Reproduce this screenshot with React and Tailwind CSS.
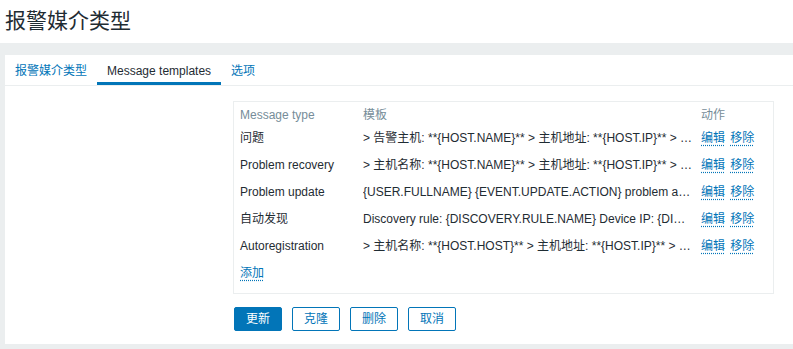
import React from "react";

const rows = [
  {
    type: "问题",
    template: "> 告警主机: **{HOST.NAME}** > 主机地址: **{HOST.IP}** > 告警时间: {EVENT.DATE} {EVENT.TIME}",
  },
  {
    type: "Problem recovery",
    template: "> 主机名称: **{HOST.NAME}** > 主机地址: **{HOST.IP}** > 恢复时间: {EVENT.RECOVERY.DATE}",
  },
  {
    type: "Problem update",
    template: "{USER.FULLNAME} {EVENT.UPDATE.ACTION} problem at {EVENT.UPDATE.DATE} {EVENT.UPDATE.TIME}",
  },
  {
    type: "自动发现",
    template: "Discovery rule: {DISCOVERY.RULE.NAME} Device IP: {DISCOVERY.DEVICE.IPADDRESS}",
  },
  {
    type: "Autoregistration",
    template: "> 主机名称: **{HOST.HOST}** > 主机地址: **{HOST.IP}** > 注册时间: {EVENT.DATE}",
  },
];

const font = { fontFamily: '"Liberation Sans", Arial, "Noto Sans CJK SC", sans-serif' };

const Link = ({ children, className = "" }) => (
  <a
    href="#"
    className={`text-[#0275b8] underline decoration-dotted decoration-[#0275b8] underline-offset-[3px] ${className}`}
  >
    {children}
  </a>
);

export default function App() {
  return (
    <div className="w-[793px] h-[349px] bg-[#ebeeef] overflow-hidden text-[12px] text-[#1f2c33]" style={font}>
      <header className="h-[43px] bg-white px-[5px] pt-[7px]">
        <h1 className="text-[21px] leading-[28px] font-normal text-[#1f2c33]">报警媒介类型</h1>
      </header>

      <div className="mt-[12px] ml-[5px] bg-white h-[289px]">
        {/* tabs */}
        <div className="flex h-[31px] border-b border-[#ebeeef]">
          <div className="px-[10px] pt-[7px] text-[#0275b8]">报警媒介类型</div>
          <div className="px-[10px] pt-[7px] border-b-[3px] border-[#0275b8] text-[#1f2c33]">Message templates</div>
          <div className="px-[10px] pt-[7px] text-[#0275b8]">选项</div>
        </div>

        <div className="pl-[228px] pt-[15px]">
          <div className="w-[541px] border border-[#ebeeef] px-[6px] pt-[3px] pb-[7px]">
            <table className="w-full table-fixed border-collapse">
              <colgroup>
                <col className="w-[123px]" />
                <col className="w-[338px]" />
                <col />
              </colgroup>
              <thead>
                <tr className="h-[19px] text-left text-[#768d99]">
                  <th className="font-normal">Message type</th>
                  <th className="font-normal">模板</th>
                  <th className="font-normal">动作</th>
                </tr>
              </thead>
              <tbody>
                {rows.map((r) => (
                  <tr key={r.type} className="h-[27px]">
                    <td className="whitespace-nowrap">{r.type}</td>
                    <td className="pr-[8px]">
                      <div className="truncate">{r.template}</div>
                    </td>
                    <td className="whitespace-nowrap">
                      <Link>编辑</Link> <Link className="ml-[2px]">移除</Link>
                    </td>
                  </tr>
                ))}
                <tr className="h-[27px]">
                  <td colSpan={3}>
                    <Link>添加</Link>
                  </td>
                </tr>
              </tbody>
            </table>
          </div>

          <div className="flex gap-[10px] mt-[13px] ml-[1px]">
            <button className="w-[48px] h-[24px] rounded-[2px] bg-[#0275b8] border border-[#0275b8] text-white">更新</button>
            <button className="w-[48px] h-[24px] rounded-[2px] bg-white border border-[#0275b8] text-[#0275b8]">克隆</button>
            <button className="w-[48px] h-[24px] rounded-[2px] bg-white border border-[#0275b8] text-[#0275b8]">删除</button>
            <button className="w-[48px] h-[24px] rounded-[2px] bg-white border border-[#0275b8] text-[#0275b8]">取消</button>
          </div>
        </div>
      </div>
    </div>
  );
}
